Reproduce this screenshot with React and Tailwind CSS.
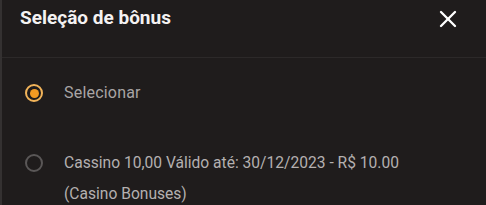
import { X } from 'lucide-react'

function Radio({ checked }) {
    return checked ? (
        <span className="w-[18px] h-[18px] rounded-full border-2 border-[#f2b45a] flex items-center justify-center shrink-0">
            <span className="w-[9px] h-[9px] rounded-full bg-[#f39a22]" />
        </span>
    ) : (
        <span className="block w-[18px] h-[18px] rounded-full border-2 border-[#5a5757] shrink-0" />
    )
}

export default function App() {
    return (
        <div
            className="w-[486px] h-[205px] overflow-hidden bg-[#1f1c1c] border-l-2 border-[#343131]"
            style={{ fontFamily: 'Roboto, "Liberation Sans", sans-serif' }}
        >
            <div className="h-[58px] flex items-start justify-between pl-[18px] pr-[26px] pt-[4px] border-b border-[#2c2929]">
                <h2 className="text-[19px] leading-[28px] font-bold text-[#f4f2f2]">Seleção de bônus</h2>
                <X className="w-7 h-7 mt-[1px] -mr-[2px] text-white" strokeWidth={2} />
            </div>

            <div className="pl-[23px] pr-4 pt-[23px]">
                <label className="flex items-center gap-[21px] h-[24px]">
                    <Radio checked />
                    <span className="text-[16px] tracking-[0.2px] text-[#a9a5a5]">Selecionar</span>
                </label>

                <label className="flex items-start gap-[21px] mt-[43px]">
                    <span className="flex mt-[6px]"><Radio /></span>
                    <span className="text-[15.6px] leading-[31px] text-[#b4b0b0]">
                        Cassino 10,00 Válido até: 30/12/2023 - R$ 10.00
                        <br />
                        (Casino Bonuses)
                    </span>
                </label>
            </div>
        </div>
    )
}
